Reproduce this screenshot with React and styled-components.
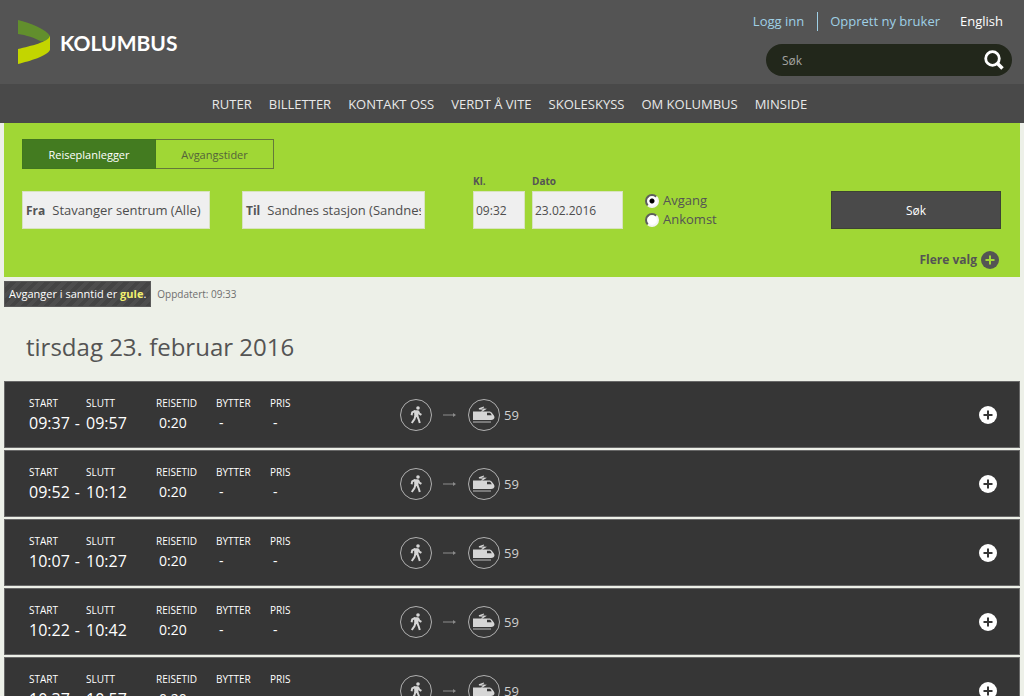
import React, { useState } from 'react';
import styled, { createGlobalStyle } from 'styled-components';

const GlobalStyle = createGlobalStyle`
  html { scrollbar-width: none; }
  body {
    margin: 0;
    background: #edf0e8;
    color: #545454;
    font-family: 'Open Sans', 'Noto Sans', sans-serif;
    font-size: 13px;
  }
  *, *::before, *::after { box-sizing: border-box; }
  button, input { font-family: inherit; }
`;

const Header = styled.header`
  display: flex;
  justify-content: space-between;
  height: 84px;
  padding: 12px 12px 0 17px;
  background: #545454;
`;

const Logo = styled.a`
  display: flex;
  align-items: center;
  gap: 9px;
  height: 60px;
  color: #fff;
  font-family: Lato, sans-serif;
  font-size: 21px;
  font-weight: 700;
  text-decoration: none;
`;

const HeaderTools = styled.div`
  display: flex;
  flex-direction: column;
  align-items: flex-end;
  gap: 13px;
`;

const UserLinks = styled.div`
  display: flex;
  align-items: center;
  height: 19px;
  padding-right: 9px;
`;

const UserLink = styled.a`
  color: ${(props) => (props.$plain ? '#fff' : '#9fd0e6')};
  line-height: 19px;
  text-decoration: none;
  margin-left: ${(props) => (props.$plain ? '20px' : '0')};
  & + &:nth-child(2) {
    border-left: 1px solid #9fd0e6;
    margin-left: 13px;
    padding-left: 12px;
  }
`;

const SearchForm = styled.form`
  display: flex;
  align-items: center;
  width: 246px;
  height: 32px;
  padding: 0 8px 0 16px;
  background: #22271b;
  border-radius: 16px;
`;

const SearchInput = styled.input`
  flex: 1;
  min-width: 0;
  padding: 0;
  border: none;
  outline: none;
  background: none;
  color: #fff;
  font-size: 12px;
  &::placeholder { color: #a3a3a0; opacity: 1; }
`;

const IconButton = styled.button`
  display: flex;
  padding: 0;
  border: none;
  background: none;
  color: #fff;
  cursor: pointer;
`;

const Nav = styled.nav`
  display: flex;
  justify-content: center;
  align-items: center;
  gap: 17px;
  height: 39px;
  padding-right: 5px;
  background: #494949;
`;

const NavLink = styled.a`
  color: #e8e8e8;
  font-size: 13px;
  text-decoration: none;
  text-transform: uppercase;
`;

const Main = styled.main`
  padding: 0 4px;
`;

const Planner = styled.form`
  height: 154px;
  padding: 16px 19px 0 18px;
  background: #a0d735;
`;

const Tabs = styled.div`
  display: flex;
`;

const Tab = styled.button`
  width: ${(props) => (props.$active ? '134px' : '118px')};
  height: 30px;
  padding: 0;
  border: 1px solid ${(props) => (props.$active ? '#41761f' : '#64793a')};
  border-left-width: ${(props) => (props.$active ? '1px' : '0')};
  background: ${(props) => (props.$active ? '#437b20' : 'transparent')};
  color: ${(props) => (props.$active ? '#fff' : '#54633a')};
  font-size: 11px;
  cursor: pointer;
`;

const Fields = styled.div`
  display: flex;
  align-items: flex-end;
  height: 60px;
`;

const PlaceField = styled.label`
  display: flex;
  align-items: center;
  gap: 7px;
  width: ${(props) => props.$width}px;
  height: 38px;
  margin-right: ${(props) => props.$after}px;
  padding: 0 3px;
  border: 1px solid #d8e3c0;
  background: #efefef;
  b { font-size: 12px; }
`;

const TextInput = styled.input`
  flex: 1;
  min-width: 0;
  padding: 0;
  border: none;
  outline: none;
  background: none;
  color: #4d4d4d;
  font-size: 13px;
`;

const TimeField = styled.label`
  display: flex;
  flex-direction: column;
  gap: 3px;
  width: ${(props) => props.$width}px;
  margin-right: 7px;
  font-size: 10px;
  font-weight: 700;
  line-height: 14px;
`;

const TimeInput = styled.input`
  width: 100%;
  height: 38px;
  padding: 0 2px;
  border: 1px solid #d8e3c0;
  outline: none;
  background: #efefef;
  color: #4d4d4d;
  font-size: 12px;
`;

const Radios = styled.div`
  display: flex;
  flex-direction: column;
  margin-left: 15px;
  height: 38px;
`;

const RadioLabel = styled.label`
  display: flex;
  align-items: center;
  gap: 4px;
  height: 19px;
  line-height: 19px;
`;

const Radio = styled.input`
  appearance: none;
  width: 14px;
  height: 14px;
  margin: 0;
  border: 2px solid;
  border-color: #5d5d5d #f4f4f4 #f4f4f4 #5d5d5d;
  border-radius: 50%;
  background: #fff;
  &:checked { background: radial-gradient(circle, #000 2px, #fff 3px); }
`;

const SubmitButton = styled.button`
  width: 170px;
  height: 38px;
  margin-left: auto;
  border: 1px solid #3d4334;
  background: #4a4a4a;
  color: #fff;
  font-size: 12px;
  cursor: pointer;
`;

const MoreOptions = styled.button`
  display: flex;
  align-items: center;
  gap: 4px;
  margin: 22px 0 0 auto;
  padding: 0 2px 0 0;
  border: none;
  background: none;
  color: #545454;
  font-size: 12px;
  font-weight: 700;
  line-height: 18px;
  cursor: pointer;
`;

const StatusBar = styled.div`
  display: flex;
  align-items: center;
  gap: 6px;
  margin-top: 4px;
  color: #6e6e6e;
  font-size: 10px;
`;

const RealtimeNote = styled.p`
  height: 26px;
  margin: 0;
  padding: 0 4px;
  border: 1px solid #5a5a5a;
  background: repeating-linear-gradient(135deg, #4d4d4d 0 4px, #444 4px 8px);
  color: #fff;
  font-size: 11px;
  line-height: 24px;
  b { color: #f3f06f; }
`;

const DayHeading = styled.h1`
  margin: 20px 0 15px 22px;
  color: #545454;
  font-size: 24px;
  font-weight: 400;
  line-height: 39px;
`;

const TripList = styled.ul`
  display: flex;
  flex-direction: column;
  gap: 2px;
  margin: 0;
  padding: 0;
  list-style: none;
`;

const TripRow = styled.li`
  display: flex;
  align-items: center;
  height: 67px;
  padding: 0 22px 0 24px;
  border: 1px solid #686868;
  background: #363636;
  color: #fff;
`;

const TripFacts = styled.dl`
  display: flex;
  width: 371px;
  margin: 0;
`;

const Fact = styled.div`
  width: ${(props) => props.$width}px;
`;

const FactName = styled.dt`
  font-size: 10px;
  line-height: 16px;
  text-transform: uppercase;
`;

const FactValue = styled.dd`
  margin: 0;
  padding-left: ${(props) => (props.$large ? '0' : '3px')};
  font-size: ${(props) => (props.$large ? '16px' : '14px')};
  line-height: 24px;
`;

const Dash = styled.span`
  margin-left: 5px;
`;

const Route = styled.div`
  display: flex;
  align-items: center;
  color: #d0d0d0;
  font-size: 13px;
`;

const ModeBadge = styled.span`
  display: flex;
  align-items: center;
  justify-content: center;
  width: 32px;
  height: 32px;
  border: 1px solid #b0b0b0;
  border-radius: 50%;
`;

const Arrow = styled.svg`
  margin: 0 11px;
`;

const LineNumber = styled.span`
  margin-left: 4px;
`;

const ExpandButton = styled(IconButton)`
  margin-left: auto;
`;

const navItems = ['Ruter', 'Billetter', 'Kontakt oss', 'Verdt å vite', 'Skoleskyss', 'Om Kolumbus', 'Minside'];

const trips = [
  { start: '09:37', end: '09:57' },
  { start: '09:52', end: '10:12' },
  { start: '10:07', end: '10:27' },
  { start: '10:22', end: '10:42' },
  { start: '10:37', end: '10:57' },
];

function LogoMark() {
  return (
    <svg width="34" height="46" viewBox="0 0 34 46" aria-hidden="true">
      <path d="M1 1C13 4 29 10 33 17V21L24 22.5C18 19 9 16 1 15Z" fill="#628f2d" />
      <path d="M1 30C14 27 31 23 33 17V31C30 37 13 42 1 45Z" fill="#c3d500" />
    </svg>
  );
}

function SearchIcon() {
  return (
    <svg width="20" height="20" viewBox="0 0 20 20" fill="none" stroke="currentColor" aria-hidden="true">
      <circle cx="8.5" cy="8.5" r="6.8" strokeWidth="2.8" />
      <path d="M13 13l5.5 5.5" strokeWidth="3.6" />
    </svg>
  );
}

function PlusIcon({ fill, cross }) {
  return (
    <svg width="18" height="18" viewBox="0 0 18 18" aria-hidden="true">
      <circle cx="9" cy="9" r="9" fill={fill} />
      <path d="M9 4.5v9M4.5 9h9" stroke={cross} strokeWidth="2" />
    </svg>
  );
}

function WalkIcon() {
  return (
    <svg width="12" height="18" viewBox="0 0 12 18" fill="none" stroke="#d6d6d6" aria-hidden="true">
      <circle cx="8" cy="2" r="1.8" fill="#d6d6d6" stroke="none" />
      <path d="M4 4.3L8.3 4.2L8.4 11L4.4 11Z" fill="#d6d6d6" stroke="none" />
      <path d="M5 5L2.2 6.4L1.6 9.2M8 5L9.2 7.5L11.4 8.8M5.4 10L4.5 13L1.8 17M7.2 10L8.6 13L9.8 17" strokeWidth="2" />
    </svg>
  );
}

function TrainIcon() {
  return (
    <svg width="22" height="18" viewBox="0 0 22 18" aria-hidden="true">
      <path d="M11 1L6 2.8L12 3.2L8.5 5.4" stroke="#d6d6d6" strokeWidth="1.2" fill="none" />
      <path d="M0 5.5H17C19 6.5 21 9 21.5 11C21.5 13 20 14 18 14H0Z" fill="#d6d6d6" />
      <path d="M14 6.8H17.2L18.8 9.2H14Z" fill="#363636" />
      <path d="M0 16H18" stroke="#bdbdbd" strokeWidth="1" />
    </svg>
  );
}

function Trip({ start, end }) {
  return (
    <TripRow>
      <TripFacts>
        <Fact $width={57}>
          <FactName>Start</FactName>
          <FactValue $large>{start}<Dash>-</Dash></FactValue>
        </Fact>
        <Fact $width={70}>
          <FactName>Slutt</FactName>
          <FactValue $large>{end}</FactValue>
        </Fact>
        <Fact $width={60}>
          <FactName>Reisetid</FactName>
          <FactValue>0:20</FactValue>
        </Fact>
        <Fact $width={54}>
          <FactName>Bytter</FactName>
          <FactValue>-</FactValue>
        </Fact>
        <Fact $width={60}>
          <FactName>Pris</FactName>
          <FactValue>-</FactValue>
        </Fact>
      </TripFacts>
      <Route>
        <ModeBadge><WalkIcon /></ModeBadge>
        <Arrow width="14" height="6" viewBox="0 0 14 6" aria-hidden="true">
          <path d="M0 3H11" stroke="#8c8c8c" />
          <path d="M10 1L13 3L10 5Z" fill="#8c8c8c" />
        </Arrow>
        <ModeBadge><TrainIcon /></ModeBadge>
        <LineNumber>59</LineNumber>
      </Route>
      <ExpandButton type="button" aria-label="Vis detaljer">
        <PlusIcon fill="#fff" cross="#363636" />
      </ExpandButton>
    </TripRow>
  );
}

function App() {
  const [direction, setDirection] = useState('Avgang');

  return (
    <>
      <GlobalStyle />
      <Header>
        <Logo href="#">
          <LogoMark />
          KOLUMBUS
        </Logo>
        <HeaderTools>
          <UserLinks>
            <UserLink href="#">Logg inn</UserLink>
            <UserLink href="#">Opprett ny bruker</UserLink>
            <UserLink href="#" $plain>English</UserLink>
          </UserLinks>
          <SearchForm onSubmit={(e) => e.preventDefault()}>
            <SearchInput type="text" placeholder="Søk" aria-label="Søk" />
            <IconButton type="submit" aria-label="Søk">
              <SearchIcon />
            </IconButton>
          </SearchForm>
        </HeaderTools>
      </Header>
      <Nav>
        {navItems.map((item) => (
          <NavLink key={item} href="#">{item}</NavLink>
        ))}
      </Nav>

      <Main>
        <Planner onSubmit={(e) => e.preventDefault()}>
          <Tabs>
            <Tab type="button" $active>Reiseplanlegger</Tab>
            <Tab type="button">Avgangstider</Tab>
          </Tabs>
          <Fields>
            <PlaceField $width={188} $after={32}>
              <b>Fra</b>
              <TextInput type="text" defaultValue="Stavanger sentrum (Alle)" />
            </PlaceField>
            <PlaceField $width={183} $after={48}>
              <b>Til</b>
              <TextInput type="text" defaultValue="Sandnes stasjon (Sandnes)" />
            </PlaceField>
            <TimeField $width={52}>
              Kl.
              <TimeInput type="text" defaultValue="09:32" />
            </TimeField>
            <TimeField $width={91}>
              Dato
              <TimeInput type="text" defaultValue="23.02.2016" />
            </TimeField>
            <Radios>
              {['Avgang', 'Ankomst'].map((name) => (
                <RadioLabel key={name}>
                  <Radio
                    type="radio"
                    name="direction"
                    checked={direction === name}
                    onChange={() => setDirection(name)}
                  />
                  {name}
                </RadioLabel>
              ))}
            </Radios>
            <SubmitButton type="submit">Søk</SubmitButton>
          </Fields>
          <MoreOptions type="button">
            Flere valg
            <PlusIcon fill="#545454" cross="#a0d735" />
          </MoreOptions>
        </Planner>

        <StatusBar>
          <RealtimeNote>Avganger i sanntid er <b>gule</b>.</RealtimeNote>
          <span>Oppdatert: 09:33</span>
        </StatusBar>
        <DayHeading>tirsdag 23. februar 2016</DayHeading>
        <TripList>
          {trips.map((trip) => (
            <Trip key={trip.start} start={trip.start} end={trip.end} />
          ))}
        </TripList>
      </Main>
    </>
  );
}

export default App;
